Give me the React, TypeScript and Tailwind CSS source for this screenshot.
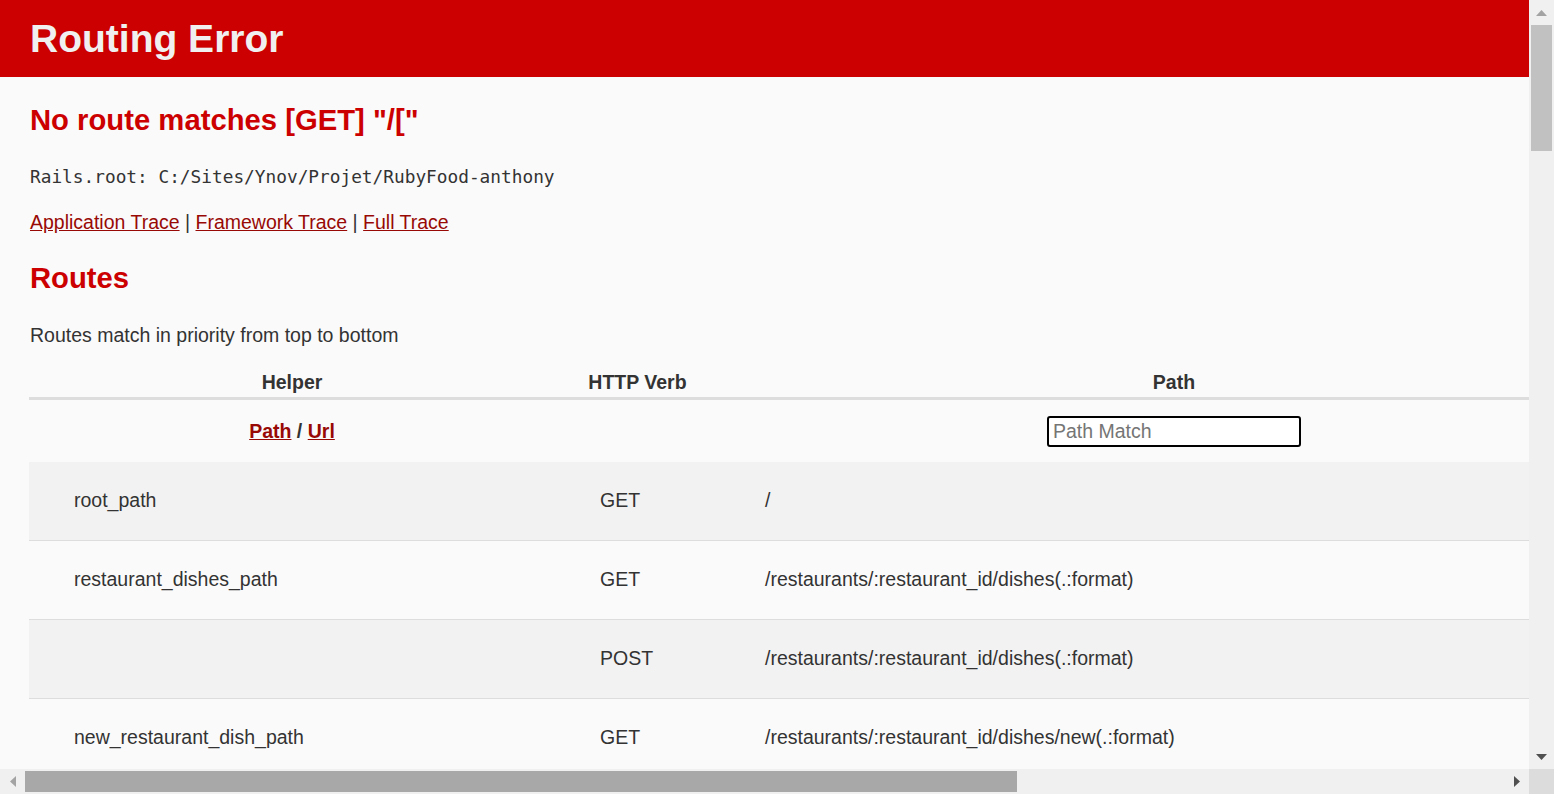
import React from "react";

type Route = { name: string; verb: string; path: string };

const routes: Route[] = [
  { name: "root_path", verb: "GET", path: "/" },
  { name: "restaurant_dishes_path", verb: "GET", path: "/restaurants/:restaurant_id/dishes(.:format)" },
  { name: "", verb: "POST", path: "/restaurants/:restaurant_id/dishes(.:format)" },
  { name: "new_restaurant_dish_path", verb: "GET", path: "/restaurants/:restaurant_id/dishes/new(.:format)" },
];

const cols = "grid grid-cols-[526px_165px_908px_640px]";

function Arrow({ dir, color }: { dir: "up" | "down" | "left" | "right"; color: string }) {
  const pts = {
    up: "0,6 5.5,0 11,6",
    down: "0,0 11,0 5.5,6",
    left: "6,0 6,11 0,5.5",
    right: "0,0 0,11 6,5.5",
  }[dir];
  const vertical = dir === "up" || dir === "down";
  return (
    <svg width={vertical ? 11 : 6} height={vertical ? 6 : 11} viewBox={vertical ? "0 0 11 6" : "0 0 6 11"}>
      <polygon points={pts} fill={color} />
    </svg>
  );
}

export default function App() {
  return (
    <div className="flex h-[794px] w-[1554px] flex-col overflow-hidden bg-[#fafafa] font-['Liberation_Sans',Arial,sans-serif] text-[19.5px] leading-[27px] text-[#333]">
      <div className="flex h-[769px]">
        <div className="w-[1529px] overflow-hidden">
          <div className="w-[2300px]">
            <header className="flex h-[77px] items-center bg-[#cc0000] px-[30px]">
              <h1 className="text-[39px] font-bold leading-[43px] text-[#f0f0f0]">Routing Error</h1>
            </header>

            <div className="px-[29px]">
              <h2 className="mt-[25px] pl-[1px] text-[29.25px] font-bold leading-[36px] text-[#cc0000]">
                No route matches [GET] "/["
              </h2>
              <p className="mt-[25px] pl-[1px] font-['DejaVu_Sans_Mono',monospace] text-[17.8px]">
                Rails.root: C:/Sites/Ynov/Projet/RubyFood-anthony
              </p>
              <p className="mt-[19px] pl-[1px]">
                <a href="#" className="text-[#980905] underline">Application Trace</a> |{" "}
                <a href="#" className="text-[#980905] underline">Framework Trace</a> |{" "}
                <a href="#" className="text-[#980905] underline">Full Trace</a>
              </p>
              <h2 className="mt-[24px] pl-[1px] text-[29.25px] font-bold leading-[36px] text-[#cc0000]">Routes</h2>
              <p className="mt-[26px] pl-[1px]">Routes match in priority from top to bottom</p>

              <div className={`${cols} h-[51px] border-b-[3px] border-[#dddddd] pt-[20px] font-bold`}>
                <div className="text-center">Helper</div>
                <div className="text-center">HTTP Verb</div>
                <div className="text-center">Path</div>
                <div />
              </div>

              <div className={`${cols} h-[62px] items-center font-bold`}>
                <div className="text-center">
                  <a href="#" className="text-[#980905] underline">Path</a> /{" "}
                  <a href="#" className="text-[#980905] underline">Url</a>
                </div>
                <div />
                <div className="flex justify-center">
                  <input
                    autoFocus
                    placeholder="Path Match"
                    className="h-[31px] w-[254px] rounded-[3px] border-2 border-black bg-white px-[4px] text-[19.5px] font-normal outline-none placeholder:text-[#757575]"
                  />
                </div>
                <div />
              </div>

              {routes.map((r, i) => (
                <div
                  key={i}
                  className={`${cols} h-[79px] items-center border-b border-[#dddddd] pb-[1px] ${i % 2 === 0 ? "bg-[#f2f2f2]" : ""}`}
                >
                  <div className="px-[45px]">{r.name}</div>
                  <div className="px-[45px]">{r.verb}</div>
                  <div className="px-[45px]">{r.path}</div>
                  <div />
                </div>
              ))}
            </div>
          </div>
        </div>

        <div className="flex w-[25px] flex-col bg-[#f0f0f0]">
          <div className="flex h-[25px] items-center justify-center">
            <Arrow dir="up" color="#a3a3a3" />
          </div>
          <div className="mx-[2px] h-[126px] bg-[#c1c1c1]" />
          <div className="flex-1" />
          <div className="flex h-[25px] items-center justify-center">
            <Arrow dir="down" color="#505050" />
          </div>
        </div>
      </div>

      <div className="flex h-[25px]">
        <div className="flex flex-1 bg-[#f0f0f0]">
          <div className="flex w-[25px] items-center justify-center">
            <Arrow dir="left" color="#a3a3a3" />
          </div>
          <div className="my-[2px] w-[992px] bg-[#a8a8a8]" />
          <div className="flex-1" />
          <div className="flex w-[25px] items-center justify-center">
            <Arrow dir="right" color="#505050" />
          </div>
        </div>
        <div className="w-[25px] bg-[#dcdcdc]" />
      </div>
    </div>
  );
}
